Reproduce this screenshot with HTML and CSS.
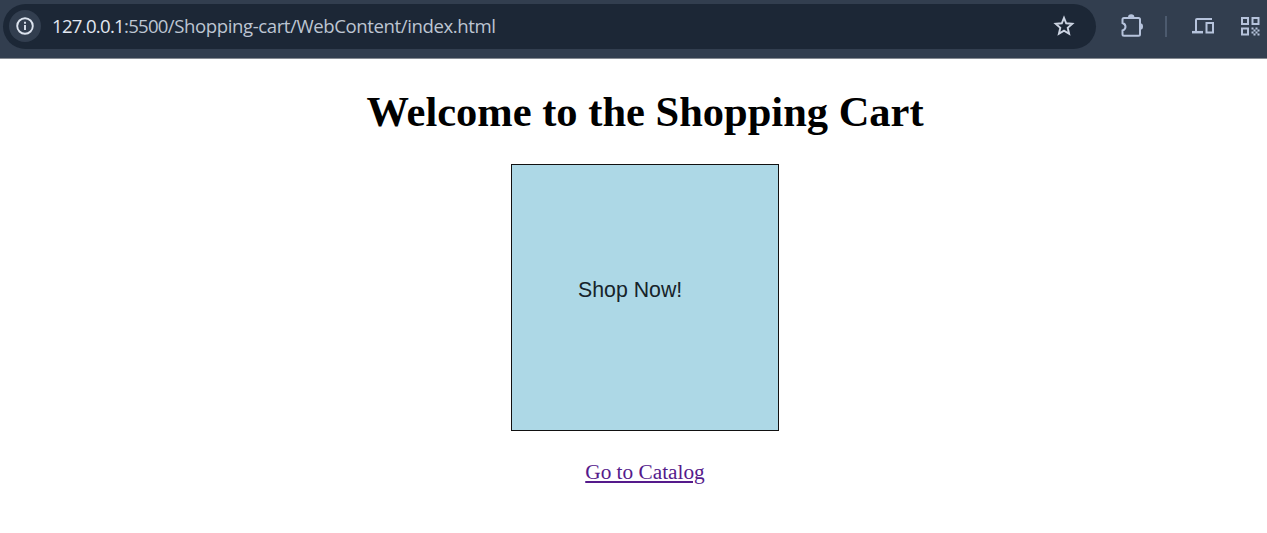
FILE: index.html
```html
<!DOCTYPE html>
<html lang="en">
<head>
<meta charset="utf-8">
<title>Shopping Cart</title>
<link rel="stylesheet" href="styles.css">
</head>
<body>
<header class="toolbar">
  <div class="address">
    <span class="info">
      <svg width="18" height="18" viewBox="0 0 18 18" fill="none" stroke="#dce3ee" stroke-width="1.9"><circle cx="9" cy="9" r="7.800"/><path d="M9 8v5M9 4.700v2"/></svg>
    </span>
    <span class="url"><span class="origin"><span class="host">127.0.0.1</span>:5500</span>/Shopping-cart/WebContent/index.html</span>
    <svg class="star" width="22" height="22" viewBox="0 0 22 22" fill="none" stroke="#ccd4e2" stroke-width="1.9"><path d="M11 2.800l2.200 5.500 6.100.5-4.600 4 1.400 5.900-5.100-3.100-5.100 3.100 1.400-5.900-4.600-4 6.100-.5z"/></svg>
  </div>
  <svg class="puzzle" width="24" height="26" viewBox="0 0 24 26"><path d="M4 5h14.500a1.500 1.500 0 0 1 1.500 1.500v14.700a1.500 1.500 0 0 1-1.500 1.500H4a1.500 1.500 0 0 1-1.500-1.500v-3.700c4-1.500 4-6 0-7.500v-3.500a1.500 1.500 0 0 1 1.500-1.500" fill="none" stroke="#b6c3dc" stroke-width="2"/><path d="M8 4.500a3.200 3.200 0 0 1 6.400 0zM20 10.300a3 3.200 0 0 1 0 6.400z" fill="#b6c3dc"/></svg>
  <span class="divider"></span>
  <svg class="devices" width="24" height="20" viewBox="0 0 24 20" fill="none" stroke="#b6c3dc" stroke-width="2"><path d="M21 3H6a1 1 0 0 0-1 1v12"/><path stroke-width="2.500" d="M1 16.200h11"/><path d="M15.500 7H22v9.500h-6.500z"/></svg>
  <svg class="qr" width="20" height="20" viewBox="0 0 20 20" fill="none" stroke="#b6c3dc" stroke-width="2"><path d="M2 2h6v6H2zM12.500 2h6v6h-6zM2 12.500h6v6H2z"/><path fill="#b6c3dc" stroke="none" d="M11.500 11.500h2v2h-2zM15.500 11.500h2v2h-2zM13.500 13.500h2v2h-2zM17.500 13.500h2v2h-2zM11.500 15.500h2v2h-2zM15.500 15.500h2v2h-2zM13.500 17.500h2v2h-2zM17.500 17.500h2v2h-2z"/></svg>
</header>
<main class="page">
  <h1 class="title">Welcome to the Shopping Cart</h1>
  <div class="banner"><span class="banner-text">Shop Now!</span></div>
  <a class="catalog" href="#">Go to Catalog</a>
</main>
</body>
</html>
```
FILE: styles.css
```css
* { box-sizing: border-box; }
body { margin: 0; height: 533px; overflow: hidden; background: #fff; font-family: "Liberation Serif", serif; }
.toolbar { display: flex; align-items: center; height: 59px; padding: 0 0 6px 3px; background: #323e4f; border-bottom: 1px solid #858a91; }
.toolbar svg { display: block; flex: none; }
.address { display: flex; flex: none; align-items: center; width: 1093px; height: 45px; padding: 0 21px 0 6px; border-radius: 23px; background: #1c2736; }
.info { display: flex; align-items: center; justify-content: center; width: 32px; height: 32px; border-radius: 50%; background: #323e4f; }
.url { margin-left: 11px; font: 18.6px/26px "Open Sans", sans-serif; letter-spacing: -0.41px; color: #bdc5d2; white-space: nowrap; }
.origin { letter-spacing: -0.72px; }
.host { color: #e3e8f1; }
.star { margin-left: auto; }
.puzzle { margin-left: 24px; }
.divider { flex: none; width: 2px; height: 21px; margin-left: 21px; background: #4c5a6e; }
.devices { margin-left: 24px; }
.qr { margin-left: 25px; }
.page { display: flex; flex-direction: column; align-items: center; padding: 28px 0 0 23px; }
.title { margin: 0; font-size: 42.5px; line-height: 49px; color: #000; white-space: nowrap; }
.banner { display: flex; align-items: center; width: 268px; height: 267px; margin-top: 28px; padding: 0 0 15px 66px; border: 1px solid #111; background: #add8e6; }
.banner-text { font: 21.3px/25px "Liberation Sans", sans-serif; color: #16232a; }
.catalog { margin-top: 29px; font-size: 21.3px; line-height: 25px; color: #551a8b; text-underline-offset: 2px; }
```
